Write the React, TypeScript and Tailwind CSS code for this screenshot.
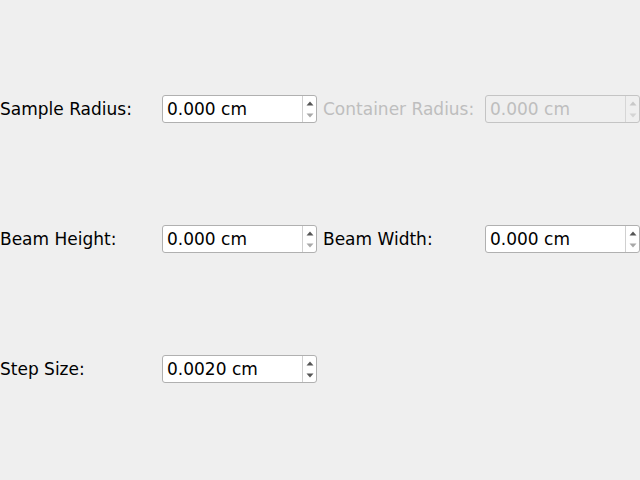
import type { ReactNode } from 'react'

function Arrows({ disabled, downDim }: { disabled?: boolean; downDim?: boolean }) {
  const up = disabled ? '#c8c8c8' : '#555555'
  const down = disabled ? '#d4d4d4' : downDim ? '#a8a8a8' : '#555555'
  return (
    <div className={`flex w-[14px] flex-col items-center justify-center gap-[7px] border-l ${disabled ? 'border-[#d6d6d6]' : 'border-[#d0d0d0]'}`}>
      <svg width="8" height="5" viewBox="0 0 8 5">
        <polygon points="4,0.5 7.5,4.5 0.5,4.5" fill={up} />
      </svg>
      <svg width="8" height="5" viewBox="0 0 8 5">
        <polygon points="0.5,0.5 7.5,0.5 4,4.5" fill={down} />
      </svg>
    </div>
  )
}

function SpinBox({ value, disabled, downDim }: { value: string; disabled?: boolean; downDim?: boolean }) {
  return (
    <div
      className={`flex h-[28px] w-[155px] rounded-[3px] border ${
        disabled ? 'border-[#c4c4c4] bg-[#efefef] text-[#bebebe]' : 'border-[#b0b0b0] bg-white text-black'
      }`}
    >
      <div className="flex flex-1 items-center pl-[4px] pt-[2px]">{value}</div>
      <Arrows disabled={disabled} downDim={downDim} />
    </div>
  )
}

function Label({ children, disabled }: { children: ReactNode; disabled?: boolean }) {
  return <div className={`pt-[2px] ${disabled ? 'text-[#bebebe]' : 'text-black'}`}>{children}</div>
}

export default function App() {
  return (
    <div
      className="h-[480px] w-[640px] bg-[#efefef] pt-[44px] text-[17px]"
      style={{ fontFamily: '"DejaVu Sans", sans-serif' }}
    >
      <div className="grid grid-cols-[162px_155px_6px_162px_155px] grid-rows-[130px_130px_130px] items-center">
        <Label>Sample Radius:</Label>
        <SpinBox value="0.000 cm" downDim />
        <div />
        <Label disabled>Container Radius:</Label>
        <SpinBox value="0.000 cm" disabled />

        <Label>Beam Height:</Label>
        <SpinBox value="0.000 cm" downDim />
        <div />
        <Label>Beam Width:</Label>
        <SpinBox value="0.000 cm" downDim />

        <Label>Step Size:</Label>
        <SpinBox value="0.0020 cm" />
        <div />
        <div />
        <div />
      </div>
    </div>
  )
}
